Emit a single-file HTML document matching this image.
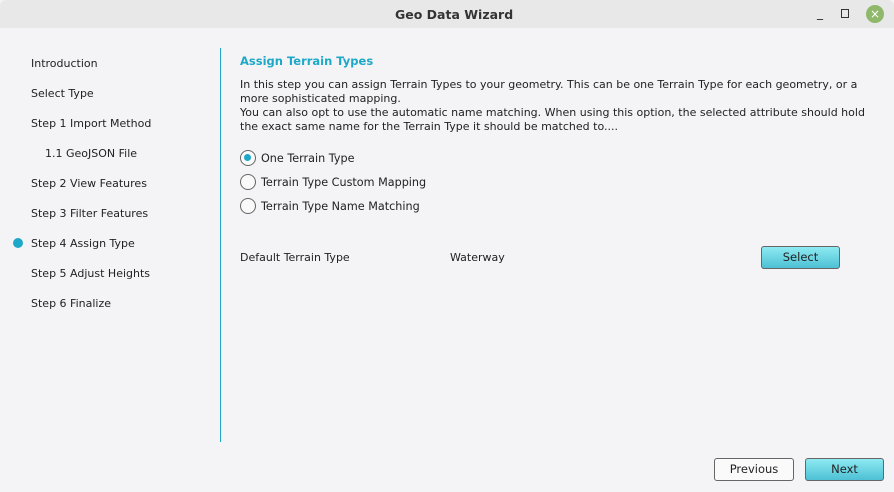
<!DOCTYPE html>
<html><head><style>
*{margin:0;padding:0;box-sizing:border-box}
body{width:894px;height:492px;background:#f4f4f7;font-family:"DejaVu Sans","Liberation Sans",sans-serif;font-size:11px;color:#222;position:relative;overflow:hidden}
.t{position:absolute;white-space:nowrap}
#title{position:absolute;left:0;top:0;width:894px;height:28px;background:#e8e8e8;border-radius:6px 6px 0 0}
.side{left:31px}
.radio{position:absolute;left:240px;width:16px;height:16px;border:1.5px solid #666;border-radius:50%;background:#fafafa}
.btn{position:absolute;height:23px;border:1px solid #666;border-radius:3px;text-align:center;line-height:21px;font-size:11.5px}
.cy{background:linear-gradient(#8eeaf2,#4dc0d4)}
.rl{font-size:11.2px}
</style></head><body>
<div id="title"></div>
<div class="t" style="left:395px;top:7px;font-size:12.5px;font-weight:bold;color:#333">Geo Data Wizard</div>
<div class="t" style="left:817px;top:6px;font-size:12px">_</div>
<div style="position:absolute;left:841px;top:9px;width:8px;height:9px;border:1.5px solid #333"></div>
<div style="position:absolute;left:866px;top:5px;width:18px;height:18px;border-radius:50%;background:#8fb86a;color:#fff;font-size:12px;text-align:center;line-height:18px">×</div>
<div class="t side" style="top:57px">Introduction</div>
<div class="t side" style="top:87px">Select Type</div>
<div class="t side" style="top:117px">Step 1 Import Method</div>
<div class="t" style="left:45px;top:147px">1.1 GeoJSON File</div>
<div class="t side" style="top:177px">Step 2 View Features</div>
<div class="t side" style="top:207px">Step 3 Filter Features</div>
<div style="position:absolute;left:13px;top:238px;width:10px;height:10px;border-radius:50%;background:#1ea8c8"></div>
<div class="t side" style="top:237px">Step 4 Assign Type</div>
<div class="t side" style="top:267px">Step 5 Adjust Heights</div>
<div class="t side" style="top:297px">Step 6 Finalize</div>
<div style="position:absolute;left:220px;top:48px;width:1px;height:394px;background:#1ea8c8"></div>
<div class="t" style="left:240px;top:54px;font-weight:bold;color:#1ea8c8;font-size:11.5px">Assign Terrain Types</div>
<div class="t" style="left:240px;top:78px;line-height:14px">In this step you can assign Terrain Types to your geometry. This can be one Terrain Type for each geometry, or a<br>more sophisticated mapping.<br>You can also opt to use the automatic name matching. When using this option, the selected attribute should hold<br>the exact same name for the Terrain Type it should be matched to....</div>
<div class="radio" style="top:150px"><div style="position:absolute;left:3px;top:3px;width:7px;height:7px;border-radius:50%;background:#1ea8c8"></div></div>
<div class="t rl" style="left:261px;top:152px">One Terrain Type</div>
<div class="radio" style="top:174px"></div>
<div class="t rl" style="left:261px;top:176px">Terrain Type Custom Mapping</div>
<div class="radio" style="top:198px"></div>
<div class="t rl" style="left:261px;top:200px">Terrain Type Name Matching</div>
<div class="t" style="left:240px;top:251px">Default Terrain Type</div>
<div class="t" style="left:450px;top:251px">Waterway</div>
<div class="btn cy" style="left:761px;top:246px;width:79px">Select</div>
<div class="btn" style="left:714px;top:458px;width:80px;background:#fafafa">Previous</div>
<div class="btn cy" style="left:805px;top:458px;width:79px">Next</div>
</body></html>
